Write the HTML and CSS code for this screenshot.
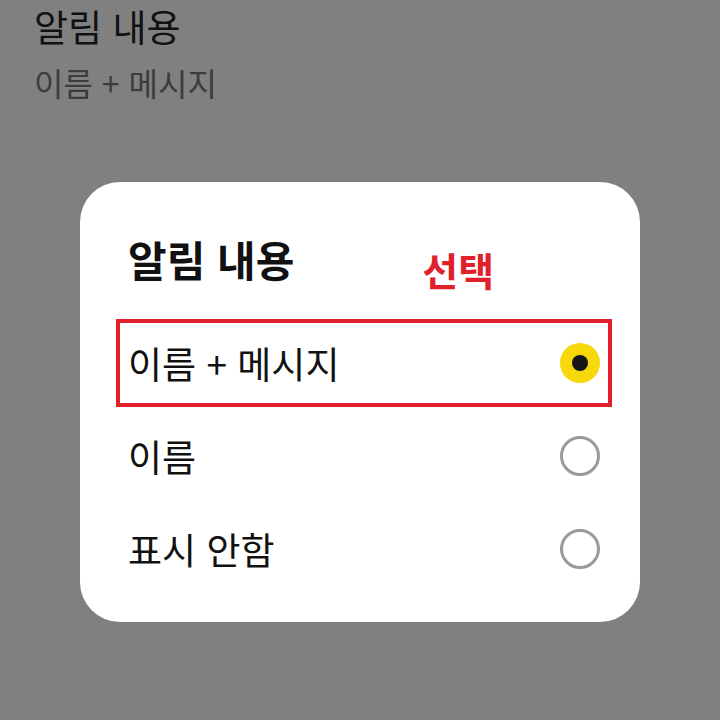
FILE: index.html
```html
<!DOCTYPE html>
<html lang="ko">
<head>
<meta charset="utf-8">
<link rel="stylesheet" href="styles.css">
</head>
<body>
<div class="screen">
  <div class="setting">
    <div class="setting-title">알림 내용</div>
    <div class="setting-value">이름 + 메시지</div>
  </div>
  <div class="dialog">
    <div class="dialog-head">
      <div class="dialog-title">알림 내용</div>
      <div class="note">선택</div>
    </div>
    <div class="options">
      <div class="option selected">
        <span class="label">이름 + 메시지</span>
        <span class="radio on"><span class="dot"></span></span>
      </div>
      <div class="option">
        <span class="label">이름</span>
        <span class="radio"></span>
      </div>
      <div class="option">
        <span class="label">표시 안함</span>
        <span class="radio"></span>
      </div>
    </div>
  </div>
</div>
</body>
</html>
```
FILE: styles.css
```css
html, body {
  margin: 0;
  padding: 0;
  background: #808080;
}
body {
  font-family: "Noto Sans CJK KR", "Noto Sans", sans-serif;
  width: 720px;
  height: 720px;
  overflow: hidden;
}
.screen {
  width: 720px;
  height: 720px;
}
.setting {
  padding: 4px 0 0 34px;
  height: 96px;
}
.setting-title {
  font-size: 37px;
  line-height: 44px;
  color: #111;
}
.setting-value {
  font-size: 32px;
  line-height: 40px;
  margin-top: 14px;
  color: #3c3c3c;
}
.dialog {
  margin: 82px 0 0 80px;
  width: 560px;
  box-sizing: border-box;
  background: #fff;
  border-radius: 40px;
  padding: 55px 28px 29px 36px;
}
.dialog-head {
  display: flex;
  align-items: flex-start;
  padding-left: 12px;
  height: 54px;
  margin-bottom: 28px;
}
.dialog-title {
  font-size: 42px;
  line-height: 44px;
  font-weight: 700;
  color: #111;
}
.note {
  margin: 10px 0 0 128px;
  font-size: 39px;
  line-height: 44px;
  font-weight: 700;
  color: #e0202a;
}
.options {
  display: flex;
  flex-direction: column;
  gap: 5px;
}
.option {
  height: 88px;
  box-sizing: border-box;
  border: 4px solid transparent;
  padding: 0 8px;
  display: flex;
  align-items: center;
  justify-content: space-between;
}
.option.selected {
  border-color: #e2202b;
}
.label {
  font-size: 37px;
  line-height: 44px;
  color: #111;
}
.radio {
  width: 40px;
  height: 40px;
  box-sizing: border-box;
  border-radius: 50%;
  border: 3px solid #9a9a9a;
  display: flex;
  align-items: center;
  justify-content: center;
}
.radio.on {
  border: none;
  background: #f7d80a;
}
.dot {
  width: 16px;
  height: 16px;
  border-radius: 50%;
  background: #161616;
}
```
